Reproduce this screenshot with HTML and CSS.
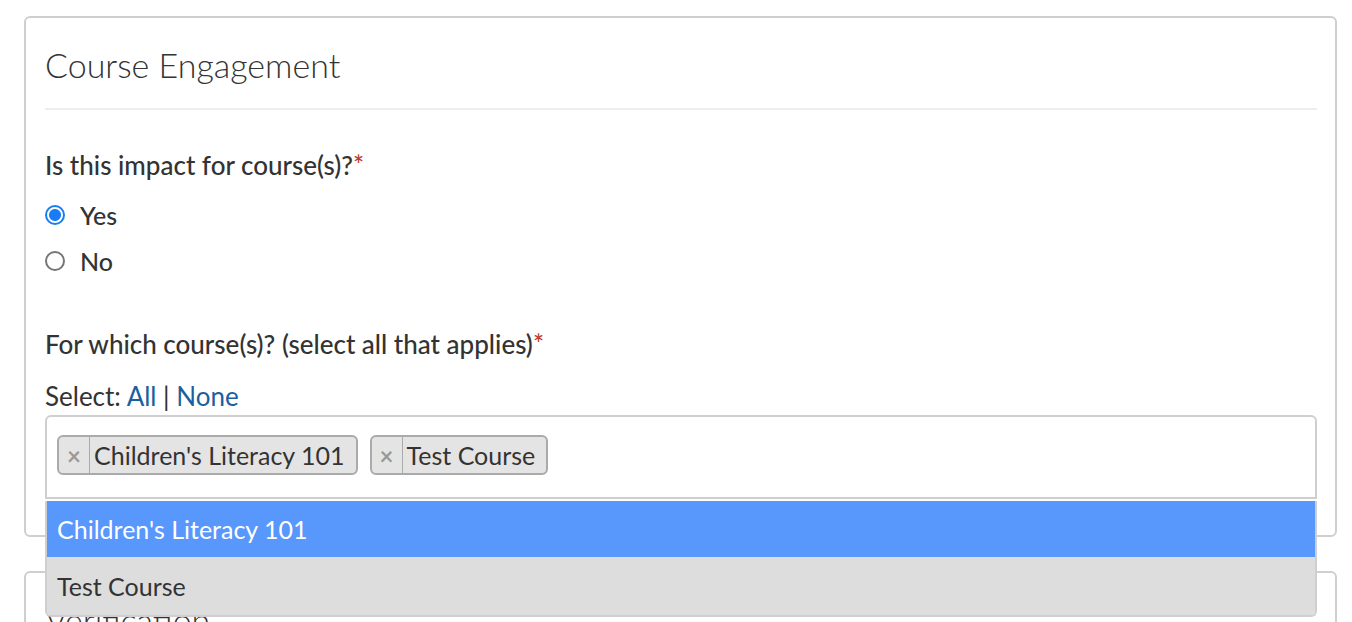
FILE: index.html
```html
<!DOCTYPE html>
<html lang="en">
<head>
  <meta charset="UTF-8" />
  <title>Course Engagement</title>
  <link rel="stylesheet" href="styles.css">
</head>
<body>
  <div class="card">
    <h2 class="card-title">Course Engagement</h2>
    <hr class="divider" />

    <p class="question">Is this impact for course(s)?<span class="req">*</span></p>
    <label class="radio"><input type="radio" name="for_course" checked /> Yes</label>
    <label class="radio"><input type="radio" name="for_course" /> No</label>

    <p class="question second">For which course(s)? (select all that applies)<span class="req">*</span></p>
    <p class="select-line">Select: <a href="#">All</a> | <a href="#">None</a></p>

    <div class="multi">
      <div class="choices">
        <span class="tag"><span class="tag-x">×</span>Children's Literacy 101</span>
        <span class="tag"><span class="tag-x">×</span>Test Course</span>
      </div>
      <ul class="dropdown">
        <li class="option highlighted">Children's Literacy 101</li>
        <li class="option selected">Test Course</li>
      </ul>
    </div>
  </div>

  <div class="card">
    <h2 class="card-title">Verification</h2>
  </div>
</body>
</html>
```

FILE: styles.css
```css
body {
  font-family: 'Lato', 'Noto Sans', sans-serif;
  background-color: #fff;
  color: #333;
  margin: 0;
  padding: 16px 15px 0 24px;
  overflow: hidden;
}
.card {
  border: 2px solid #cfcfcf;
  border-radius: 6px;
  padding: 0 18px 36px 19px;
  margin-bottom: 34px;
}
.card-title {
  font-size: 34px;
  font-weight: 300;
  line-height: 36px;
  margin: 0;
  padding-top: 29px;
  color: #333;
}
.divider {
  border: none;
  border-top: 2px solid #eee;
  margin: 25px 0 0;
}
.question {
  font-size: 26px;
  font-weight: 500;
  line-height: 30px;
  margin: 40px 0 12px;
}
.question.second {
  margin-top: 45px;
  margin-bottom: 22px;
}
.req {
  color: #c0392b;
}
.radio {
  display: flex;
  align-items: center;
  gap: 15px;
  font-size: 25px;
  font-weight: 500;
  height: 46px;
}
.radio input {
  appearance: none;
  width: 20px;
  height: 20px;
  margin: 0;
  border: 2px solid #767676;
  border-radius: 50%;
  background: #fff;
}
.radio input:checked {
  border-color: #1a7cf5;
  background: radial-gradient(circle, #1a7cf5 0 5.5px, #fff 6.5px);
}
.select-line {
  font-size: 26px;
  line-height: 30px;
  margin: 0 0 4px;
}
.select-line a {
  color: #1a5f9e;
  text-decoration: none;
}
.multi {
  position: relative;
}
.choices {
  border: 2px solid #cfcfcf;
  border-radius: 6px 6px 0 0;
  padding: 18px 10px 22px;
  display: flex;
  gap: 12px;
}
.tag {
  display: flex;
  align-items: center;
  height: 36px;
  background: #e4e4e4;
  border: 2px solid #aaa;
  border-radius: 6px;
  font-size: 25px;
  padding-right: 11px;
  color: #333;
}
.tag-x {
  width: 30px;
  height: 100%;
  display: flex;
  align-items: center;
  justify-content: center;
  border-right: 1px solid #aaa;
  margin-right: 4px;
  color: #999;
  font-weight: 700;
  font-size: 24px;
}
.dropdown {
  position: absolute;
  left: 0;
  right: 0;
  top: 100%;
  margin: 2px 0 0;
  padding: 0;
  list-style: none;
  border: 2px solid #cfcfcf;
  border-top: none;
  border-radius: 0 0 6px 6px;
  overflow: hidden;
  background: #fff;
}
.option {
  font-size: 25px;
  padding: 0 10px;
  height: 56px;
  line-height: 56px;
}
.option.highlighted {
  background: #5897fb;
  color: #fff;
}
.option.selected {
  background: #ddd;
  color: #333;
  height: 58px;
  line-height: 58px;
}
```
